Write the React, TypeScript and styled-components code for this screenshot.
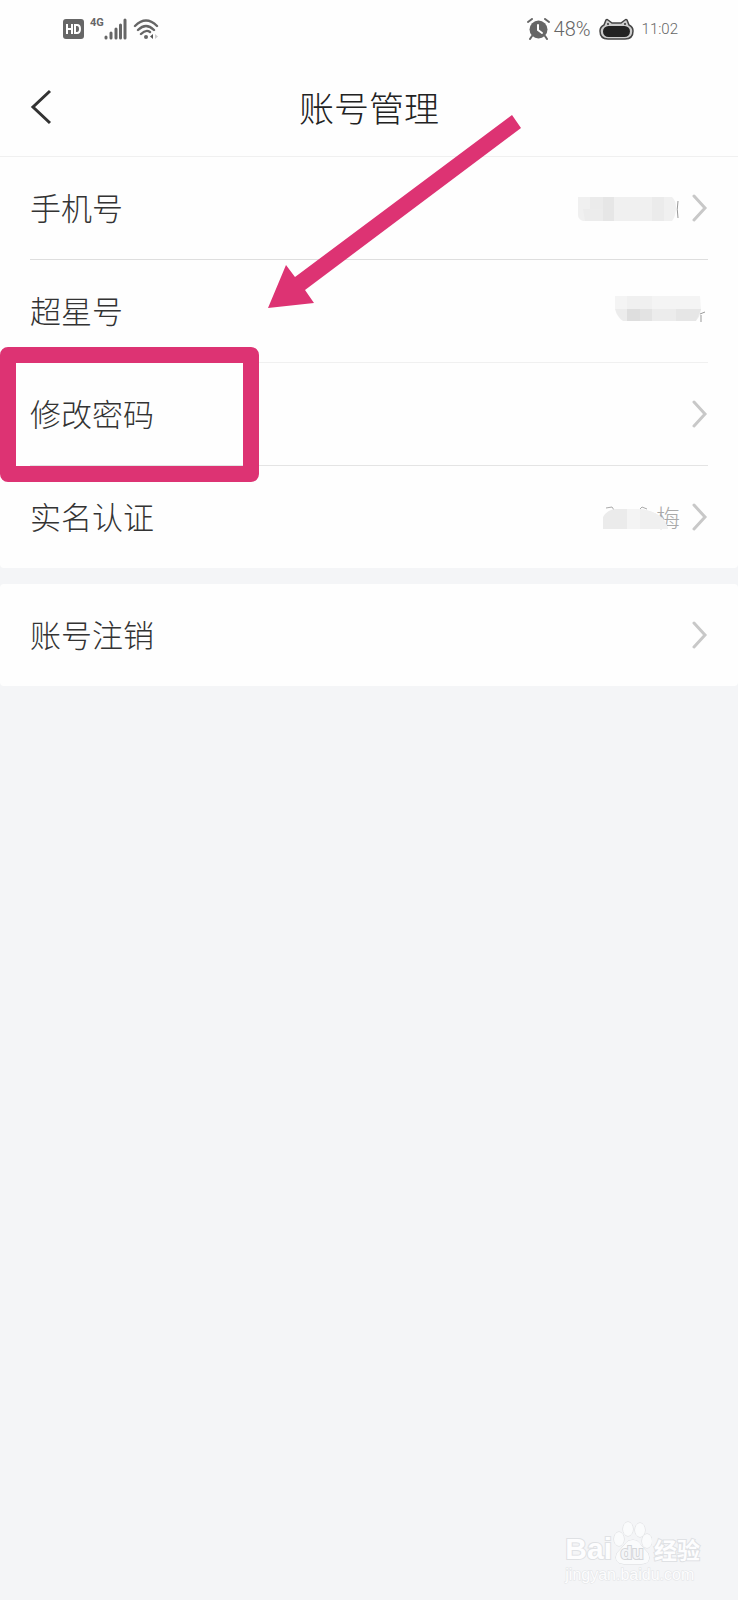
import React from "react";
import styled, { createGlobalStyle } from "styled-components";

const PINK = "#dd3373";
const PAGE = "#f4f5f7";

const GlobalStyle = createGlobalStyle`
  * { box-sizing: border-box; }
  body {
    margin: 0;
    background: ${PAGE};
    font-family: "Noto Sans CJK SC", "Noto Sans", sans-serif;
    color: #333;
  }
`;

const Screen = styled.div`
  position: relative;
  display: flex;
  flex-direction: column;
  min-height: 100vh;
`;

const StatusBar = styled.div`
  display: flex;
  align-items: center;
  justify-content: space-between;
  height: 57px;
  padding: 0 60px 0 63px;
  background: #fefefe;
`;

const StatusGroup = styled.div<{ $gap: number }>`
  display: flex;
  align-items: center;
  gap: ${(p) => p.$gap}px;
`;

const StatusText = styled.span`
  font-family: "Liberation Sans Narrow", "Roboto", sans-serif;
  font-weight: 300;
  font-size: 20px;
  line-height: 24px;
  color: #666;
`;

const ClockText = styled(StatusText)`
  font-size: 15px;
`;

const Signal = styled.div`
  display: flex;
  align-items: flex-start;
`;

const NetworkLabel = styled.span`
  font-family: "Liberation Sans Narrow", "Roboto", sans-serif;
  font-weight: 700;
  font-size: 11px;
  line-height: 10px;
  color: #666;
`;

const Header = styled.header`
  display: grid;
  grid-template-columns: 60px 1fr 60px;
  align-items: center;
  height: 100px;
  background: #fefefe;
  border-bottom: 1px solid #f0f0f0;
`;

const BackButton = styled.button`
  display: flex;
  justify-content: flex-end;
  padding: 0 8px 0 0;
  border: 0;
  background: none;
  cursor: pointer;
`;

const Title = styled.h1`
  margin: 0;
  text-align: center;
  font-size: 35px;
  font-weight: 300;
  line-height: 44px;
  color: #222;
`;

const Group = styled.ul`
  margin: 0 0 16px;
  padding: 0;
  list-style: none;
  background: #fefefe;
  border-radius: 0 0 4px 4px;

  & + & {
    border-radius: 4px;
  }
`;

const Item = styled.li`
  position: relative;
  padding: 0 30px;
`;

const Row = styled.button<{ $line?: string }>`
  display: flex;
  align-items: center;
  justify-content: space-between;
  box-sizing: content-box;
  width: 100%;
  height: 102px;
  padding: 0;
  border: 0;
  border-bottom: ${(p) => (p.$line ? `1px solid ${p.$line}` : "0")};
  background: none;
  font: inherit;
  color: inherit;
  text-align: left;
  cursor: pointer;
`;

const Label = styled.span`
  padding-bottom: 2px;
  font-size: 31px;
  font-weight: 300;
  line-height: 40px;
`;

const Value = styled.span`
  display: flex;
  align-items: center;
  gap: 12px;
`;

const NameValue = styled.span`
  position: relative;
  display: flex;
  justify-content: flex-end;
  width: 78px;
  font-size: 24px;
  font-weight: 300;
  line-height: 28px;
  color: #aaa;
`;

const NameMask = styled.svg`
  position: absolute;
  left: 0;
  top: 0;
`;

const Highlight = styled.span`
  position: absolute;
  z-index: 1;
  left: 0;
  top: -16px;
  bottom: -16px;
  width: 259px;
  border: 16px solid ${PINK};
  border-radius: 8px;
  pointer-events: none;
`;

const Arrow = styled.svg`
  position: absolute;
  z-index: 2;
  left: 267px;
  top: 115px;
  pointer-events: none;
`;

const Watermark = styled.footer`
  display: flex;
  flex-direction: column;
  align-items: flex-start;
  align-self: flex-end;
  margin: auto 38px 15px 0;
  color: #fdfdfe;
  -webkit-text-stroke: 2px #dfe1e4;
  paint-order: stroke fill;
`;

const Brand = styled.div`
  display: flex;
  align-items: flex-end;
`;

const BrandText = styled.span`
  font-family: "Liberation Sans", sans-serif;
  font-weight: 700;
  font-size: 30px;
  line-height: 32px;
`;

const BrandChinese = styled.span`
  margin-left: 2px;
  font-weight: 700;
  font-size: 23px;
  line-height: 32px;
`;

const Paw = styled.span`
  position: relative;
  display: flex;
  justify-content: center;
  width: 40px;
  height: 44px;
`;

const PawText = styled.span`
  position: absolute;
  bottom: 2px;
  font-family: "Liberation Sans", sans-serif;
  font-weight: 700;
  font-size: 19px;
  line-height: 20px;
  color: ${PAGE};
  -webkit-text-stroke: 2px #d4d6d9;
`;

const Site = styled.span`
  font-family: "Liberation Sans", sans-serif;
  font-size: 16px;
  line-height: 20px;
  -webkit-text-stroke: 1px #e2e4e6;
`;

const Chevron = () => (
  <svg width="16" height="28" viewBox="0 0 16 28" fill="none" aria-hidden="true">
    <path d="M2 2 L13 14 L2 26" stroke="#c8c8c8" strokeWidth="3" strokeLinecap="round" />
  </svg>
);

const PhoneMask = () => (
  <svg width="103" height="28" viewBox="0 -2 103 28" aria-label="手机号已隐藏">
    <path d="M1 1H95Q99 5 99 11Q99 20 95 25H6Q1 23 1 19Z" fill="#f0f0f0" />
    <path d="M13 1H26V13H13Z" fill="#ebebeb" />
    <path d="M26 1H37V25H26Z" fill="#e6e6e6" />
    <path d="M6 13H26V25H8Z" fill="#ececec" />
    <path d="M75 1H87V25H75Z" fill="#ebebeb" />
    <path d="M101 5Q99.500 13 101 22" stroke="#999" strokeWidth="1" fill="none" />
  </svg>
);

const IdMask = () => (
  <svg width="94" height="34" viewBox="0 0 94 34" aria-label="超星号已隐藏">
    <path d="M1 2H86L87 15H1Z" fill="#f4f4f4" />
    <path d="M13 2H38V15H13Z" fill="#f0f0f0" />
    <path d="M1 15H87Q86 24 81 27H9Q3 23 1 15Z" fill="#ececec" />
    <path d="M13 15H26V27H13Z" fill="#dedede" />
    <path d="M26 15H38V27H26Z" fill="#e3e3e3" />
    <path d="M62 15H87L82 27H62Z" fill="#e6e6e6" />
    <path d="M86 20L91 18M87 21V28" stroke="#999" strokeWidth="1" fill="none" />
  </svg>
);

const HdIcon = () => (
  <svg width="21" height="20" viewBox="0 0 21 20" aria-hidden="true">
    <rect width="21" height="20" rx="3" fill="#666" />
    <path d="M4 5V15M9 5V15M4 10H9M12 6V14H14Q17 14 17 10Q17 6 14 6Z" stroke="#fff" strokeWidth="2" fill="none" />
  </svg>
);

const BarsIcon = () => (
  <svg width="23" height="22" viewBox="0 0 23 22" stroke="#666" strokeWidth="3" strokeLinecap="round" aria-hidden="true">
    <path d="M2 19V20M7 15V20M12 11V20M16.500 7V20M21 2V20" />
  </svg>
);

const WifiIcon = () => (
  <svg width="26" height="22" viewBox="0 0 26 22" fill="none" aria-hidden="true">
    <path d="M2 8Q13 -3 24 8M5 12Q13 4 21 12M8 16Q13 11 17 14" stroke="#666" strokeWidth="2.400" strokeLinecap="round" />
    <circle cx="13" cy="19" r="2" fill="#666" />
    <path d="M20 16V21L17 18.500Z" fill="#555" />
    <path d="M22 16L25 18.500L22 21Z" fill="#ccc" />
  </svg>
);

const AlarmIcon = () => (
  <svg width="23" height="22" viewBox="0 0 23 22" fill="none" strokeLinecap="round" aria-hidden="true">
    <circle cx="11.500" cy="11.500" r="9" fill="#666" />
    <path d="M1 4L5 1M22 4L18 1M5 18L3 21M18 18L20 21" stroke="#666" strokeWidth="2" />
    <path d="M11 7V12L15 15" stroke="#fff" strokeWidth="2" />
  </svg>
);

const CatBattery = () => (
  <svg width="35" height="22" viewBox="0 0 35 22" aria-hidden="true">
    <path d="M5 7L7 2Q8 1 9 2L13 5H22L26 2Q27 1 28 2L30 7Q34 9 34 13Q34 21 26 21H9Q1 21 1 13Q1 9 5 7Z" fill="#ccc" stroke="#444" strokeWidth="1.500" />
    <rect x="4" y="8" width="27" height="11" rx="5.500" fill="#222" />
    <circle cx="9" cy="6" r="1" fill="#333" />
    <circle cx="26" cy="6" r="1" fill="#333" />
  </svg>
);

const App: React.FC = () => (
  <>
    <GlobalStyle />
    <Screen>
      <StatusBar>
        <StatusGroup $gap={6}>
          <HdIcon />
          <Signal>
            <NetworkLabel>4G</NetworkLabel>
            <BarsIcon />
          </Signal>
          <WifiIcon />
        </StatusGroup>
        <StatusGroup $gap={8}>
          <StatusGroup $gap={4}>
            <AlarmIcon />
            <StatusText>48%</StatusText>
          </StatusGroup>
          <CatBattery />
          <ClockText>11:02</ClockText>
        </StatusGroup>
      </StatusBar>

      <Header>
        <BackButton aria-label="返回">
          <svg width="22" height="38" viewBox="0 0 22 38" fill="none">
            <path d="M20 3L3 19L20 35" stroke="#333" strokeWidth="3" />
          </svg>
        </BackButton>
        <Title>账号管理</Title>
      </Header>

      <main>
        <Group>
          <Item>
            <Row $line="#dedede">
              <Label>手机号</Label>
              <Value>
                <PhoneMask />
                <Chevron />
              </Value>
            </Row>
          </Item>
          <Item>
            <Row $line="#f0f0f0">
              <Label>超星号</Label>
              <IdMask />
            </Row>
          </Item>
          <Item>
            <Row $line="#e4e4e4">
              <Label>修改密码</Label>
              <Chevron />
            </Row>
            <Highlight />
          </Item>
          <Item>
            <Row>
              <Label>实名认证</Label>
              <Value>
                <NameValue>
                  梅
                  <NameMask width="78" height="30" viewBox="0 0 78 30" aria-hidden="true">
                    <path d="M4 5L10 4L12 7M36 8L40 4L45 6" stroke="#aaa" strokeWidth="1" fill="none" />
                    <path d="M1 26V14Q6 6 14 6H38Q62 9 66 26Z" fill="#ebebeb" />
                    <path d="M25 6H38V26H25Z" fill="#f4f4f4" />
                    <path d="M38 6Q62 9 66 26H38Z" fill="#f0f0f0" />
                  </NameMask>
                </NameValue>
                <Chevron />
              </Value>
            </Row>
          </Item>
        </Group>
        <Group>
          <Item>
            <Row>
              <Label>账号注销</Label>
              <Chevron />
            </Row>
          </Item>
        </Group>
      </main>

      <Watermark>
        <Brand>
          <BrandText>Bai</BrandText>
          <Paw>
            <svg width="40" height="44" viewBox="0 0 40 44" fill="#fafbfc" stroke="#d9dbde" strokeWidth="1" aria-hidden="true">
              <ellipse cx="7" cy="18" rx="5" ry="7" />
              <ellipse cx="16" cy="8" rx="5" ry="7" />
              <ellipse cx="28" cy="9" rx="5" ry="7" />
              <ellipse cx="35" cy="20" rx="5" ry="7" />
              <path d="M21 19Q26 19 29 24Q32 28 36 32Q40 43 29 43H12Q1 42 5 32Q9 28 13 23Q16 19 21 19Z" />
            </svg>
            <PawText>du</PawText>
          </Paw>
          <BrandChinese>经验</BrandChinese>
        </Brand>
        <Site>jingyan.baidu.com</Site>
      </Watermark>

      <Arrow width="255" height="194" viewBox="0 0 255 194" aria-hidden="true">
        <path d="M245 0L254 13L38 175L47 188L1 193L19 150L28 162Z" fill={PINK} />
      </Arrow>
    </Screen>
  </>
);

export default App;
